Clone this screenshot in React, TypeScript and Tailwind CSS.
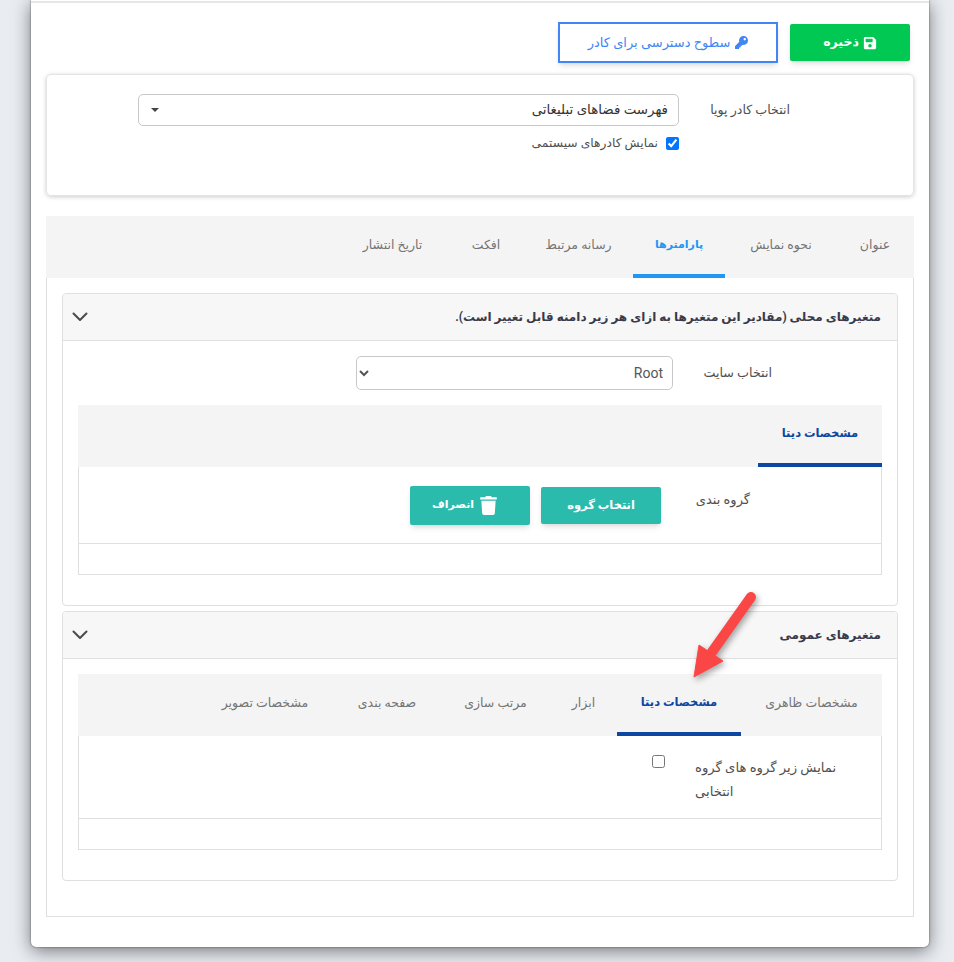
import { FaKey, FaSave, FaTrash } from "react-icons/fa";

const font = "font-['Roboto','Noto_Sans','DejaVu_Sans',sans-serif]";

function Chevron() {
  return (
    <svg width="16" height="10" viewBox="0 0 16 10" fill="none" className="mr-auto">
      <path d="M1.5 1.5 8 8l6.5-6.5" stroke="#4a4a4a" strokeWidth="2" strokeLinecap="round" strokeLinejoin="round" />
    </svg>
  );
}

function SubTabs({ items, active }: { items: { label: string; width: string }[]; active: number }) {
  return (
    <div className="flex h-[62px] bg-[#f4f4f4]">
      {items.map((t, i) => (
        <div
          key={t.label}
          className={`flex items-center justify-center border-b-4 ${t.width} ${
            i === active ? "border-[#0d47a1] text-[11.5px] font-bold text-[#0d47a1]" : "border-transparent text-[12.5px] text-[#757575]"
          }`}
        >
          {t.label}
        </div>
      ))}
    </div>
  );
}

function Accordion({ title, children }: { title: string; children: React.ReactNode }) {
  return (
    <div className="rounded-[4px] border border-[#dfdfdf]">
      <div className="flex h-[47px] items-center rounded-t-[4px] border-b border-[#dfdfdf] bg-[#f7f7f7] pl-[9px] pr-4">
        <span className="text-[12px] font-bold text-[#3a3a4a]">{title}</span>
        <Chevron />
      </div>
      <div className="px-[15px] pb-[30px] pt-[15px]">{children}</div>
    </div>
  );
}

const mainTabs = [
  { label: "عنوان", width: "w-[76px]" },
  { label: "نحوه نمایش", width: "w-[112px]" },
  { label: "پارامترها", width: "w-[92px]" },
  { label: "رسانه مرتبط", width: "w-[109px]" },
  { label: "افکت", width: "w-[76px]" },
  { label: "تاریخ انتشار", width: "w-[111px]" },
];

const generalTabs = [
  { label: "مشخصات ظاهری", width: "w-[141px]" },
  { label: "مشخصات دیتا", width: "w-[124px]" },
  { label: "ابزار", width: "w-[67px]" },
  { label: "مرتب سازی", width: "w-[109px]" },
  { label: "صفحه بندی", width: "w-[108px]" },
  { label: "مشخصات تصویر", width: "w-[136px]" },
];

export default function App() {
  return (
    <div dir="rtl" className={`relative min-h-[962px] bg-[#e9edf2] pb-[15px] pl-[31px] pr-[25px] text-[#4f4f4f] ${font}`}>
      <div className="h-[947px] rounded-b-[5px] bg-white shadow-[0_0_2px_rgba(0,0,0,0.6),0_4px_18px_rgba(0,0,0,0.5)]">
        <div className="h-[3px] border-b-2 border-[#e6e6e6]" />

        <div className="flex items-center gap-3 pr-[19px] pt-[19px]">
          <button className="flex h-[37px] w-[120px] items-center justify-center gap-1 rounded-[2px] bg-[#00c853] text-[12.5px] font-bold text-white shadow-md">
            <FaSave className="size-[14px]" />
            ذخیره
          </button>
          <button className="flex h-[41px] w-[220px] items-center justify-center gap-[5px] border-2 border-[#4285f4] bg-white text-[13px] text-[#4285f4] shadow-md">
            <FaKey className="size-[13px]" />
            سطوح دسترسی برای کادر
          </button>
        </div>

        <div className="mx-[15px] mt-[11px] h-[122px] rounded-[5px] border border-[#e4e4e4] pr-[123px] pt-[19px] shadow-[0_1px_4px_rgba(0,0,0,0.2)]">
          <div className="flex items-center">
            <label className="w-[111px] whitespace-nowrap text-[12.6px]">انتخاب کادر پویا</label>
            <div className="flex h-[32px] w-[541px] items-center justify-between rounded-[5px] border border-[#c9c9c9] pl-3 pr-[10px] text-[13.4px] text-[#333]">
              <span>فهرست فضاهای تبلیغاتی</span>
              <span className="h-0 w-0 border-x-4 border-t-4 border-x-transparent border-t-[#444]" />
            </div>
          </div>
          <label className="mr-[111px] mt-[11px] flex h-[13px] items-center gap-2 text-[12.3px]">
            <input type="checkbox" defaultChecked className="m-0 size-[13px] accent-[#0075ff]" />
            نمایش کادرهای سیستمی
          </label>
        </div>

        <div className="mx-[15px] mt-5 flex h-[62px] bg-[#f4f4f4] pr-px">
          {mainTabs.map((t, i) => (
            <div
              key={t.label}
              className={`flex items-center justify-center border-b-4 ${t.width} ${
                i === 2 ? "border-[#2196f3] text-[11px] font-bold text-[#2196f3]" : "border-transparent text-[12.5px] text-[#757575]"
              }`}
            >
              {t.label}
            </div>
          ))}
        </div>

        <div className="mx-[15px] flex flex-col gap-[5px] border-x border-b border-[#dfdfdf] px-[15px] pb-[35px] pt-[15px]">
          <Accordion title="متغیرهای محلی (مقادیر این متغیرها به ازای هر زیر دامنه قابل تغییر است).">
            <div className="flex items-center pr-[110px]">
              <label className="w-[99px] text-[12.7px]">انتخاب سایت</label>
              <select className="h-[34px] w-[317px] rounded-[5px] border border-[#c9c9c9] bg-white pl-2 pr-[5px] text-[14px] text-[#555]">
                <option>Root</option>
              </select>
            </div>
            <div className="mt-[15px]">
              <SubTabs items={[{ label: "مشخصات دیتا", width: "w-[124px]" }]} active={0} />
              <div className="border-x border-b border-[#dfdfdf]">
                <div className="flex h-[77px] border-b border-[#dfdfdf] pr-[131px]">
                  <label className="w-[89px] whitespace-nowrap pt-[23px] text-[13px]">گروه بندی</label>
                  <div className="flex items-start gap-[11px] pt-[19px]">
                    <button className="mt-px flex h-[37px] w-[120px] items-center justify-center rounded-[2px] bg-[#2bbbad] text-[11.5px] font-bold text-white shadow-md">
                      انتخاب گروه
                    </button>
                    <button className="flex h-[39px] w-[120px] items-center justify-center gap-[5px] rounded-[2px] bg-[#2bbbad] pr-[10px] text-[11px] font-bold text-white shadow-md">
                      <FaTrash className="size-[19px]" />
                      انصراف
                    </button>
                  </div>
                </div>
                <div className="h-[30px]" />
              </div>
            </div>
          </Accordion>

          <Accordion title="متغیرهای عمومی">
            <SubTabs items={generalTabs} active={1} />
            <div className="border-x border-b border-[#dfdfdf]">
              <div className="flex h-[83px] border-b border-[#dfdfdf] pr-[44px]">
                <label className="w-[142px] pt-[20px] text-left text-[13.2px] leading-6">نمایش زیر گروه های گروه انتخابی</label>
                <input type="checkbox" className="mr-[30px] mt-[19px] size-[13px]" />
              </div>
              <div className="h-[30px]" />
            </div>
          </Accordion>
        </div>
      </div>

      <svg className="pointer-events-none absolute left-[680px] top-[585px] drop-shadow-[2px_3px_3px_rgba(0,0,0,0.35)]" width="85" height="100" viewBox="680 585 85 100">
        <path d="M751 597 712 652" stroke="#fb4646" strokeWidth="10" strokeLinecap="round" />
        <path d="M694 677 699 645 723 661Z" fill="#fb4646" stroke="#fb4646" strokeWidth="1" strokeLinejoin="round" />
      </svg>
    </div>
  );
}
